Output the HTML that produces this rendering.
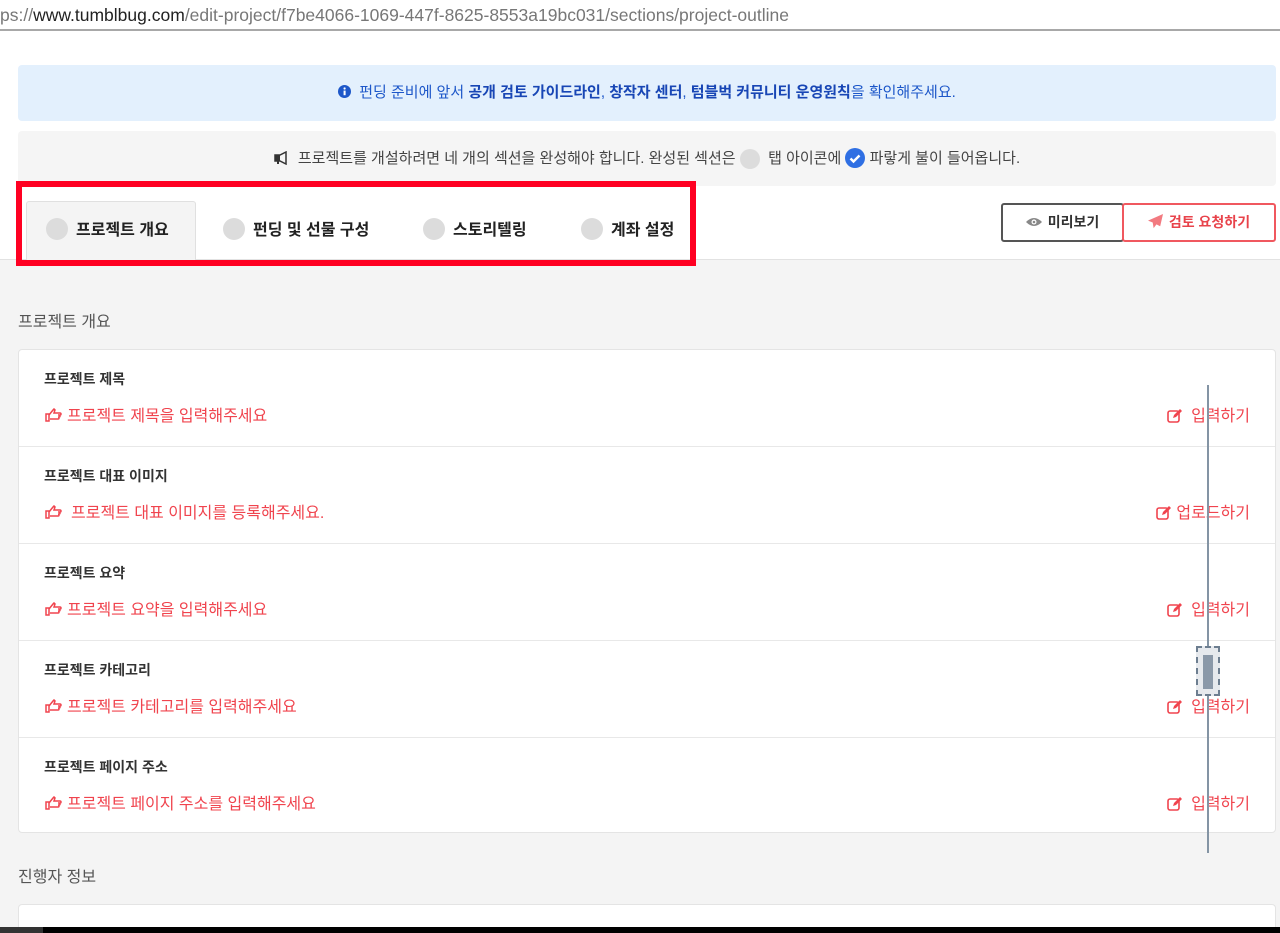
<!DOCTYPE html>
<html><head><meta charset="utf-8">
<style>
*{margin:0;padding:0;box-sizing:border-box}
html{width:1280px;height:933px;overflow:hidden}
body{width:1280px;height:933px;overflow:hidden;background:#f4f4f4;font-family:"Liberation Sans","Noto Sans CJK KR",sans-serif;position:relative;color:#333}
.abs{position:absolute}
.url{left:0;top:0;width:1280px;height:31px;background:#fff;border-bottom:2px solid #a8a8a8;font-size:17.5px;line-height:30px;color:#777;white-space:nowrap;padding-left:0}
.url b{font-weight:normal;color:#222}
.top{left:0;top:31px;width:1280px;height:229px;background:#fff;border-bottom:1px solid #e2e2e2}
.info{left:18px;top:65px;width:1258px;height:56px;background:#e3f0fd;border-radius:4px;text-align:center;font-size:15px;line-height:56px;color:#1d57c9}
.info strong{font-weight:bold;color:#1846b5}
.note{left:18px;top:131px;width:1258px;height:55px;background:#f5f5f5;border-radius:4px;text-align:center;font-size:15px;line-height:55px;color:#444}
.circ{display:inline-block;width:20px;height:20px;border-radius:50%;background:#dcdcdc;vertical-align:middle}
.tab{top:201px;height:60px;font-size:16px;font-weight:bold;color:#222;line-height:60px}
.tab .circ{width:22px;height:22px;margin-right:8px;margin-top:-3px}
.redbox{left:16px;top:181px;width:680px;height:85px;border:6px solid #ff0022}
.btn{top:203px;height:39px;font-size:14px;font-weight:bold;line-height:35px;text-align:center;border-radius:3px;background:#fff}
.card{left:18px;top:349px;width:1258px;height:484px;background:#fff;border:1px solid #e4e4e4;border-radius:4px}
.row{position:absolute;left:0;width:1256px;height:97px;border-bottom:1px solid #e8e8e8}
.row .t{position:absolute;left:25px;top:19px;font-size:14px;font-weight:bold;color:#333}
.row .r{position:absolute;left:26px;top:52px;font-size:16px;color:#f0444e}
.row .a{position:absolute;right:25px;top:52px;font-size:16px;color:#f0444e}
svg{vertical-align:middle}
</style></head><body>
<div class="abs url">ps://<b>www.tumblbug.com</b>/edit-project/f7be4066-1069-447f-8625-8553a19bc031/sections/project-outline</div>
<div class="abs top"></div>
<div class="abs info"><svg width="13" height="13" viewBox="0 0 14 14" style="margin-right:8px;margin-top:-3px"><circle cx="7" cy="7" r="7" fill="#1d57c9"/><rect x="6" y="6" width="2.2" height="5" fill="#fff"/><circle cx="7.1" cy="3.8" r="1.2" fill="#fff"/></svg>펀딩 준비에 앞서 <strong>공개 검토 가이드라인</strong>, <strong>창작자 센터</strong>, <strong>텀블벅 커뮤니티 운영원칙</strong>을 확인해주세요.</div>
<div class="abs note"><svg width="16" height="14" viewBox="0 0 16 14" style="margin-right:8px;margin-top:-3px"><path d="M1 4h5l6-3v12L6 10H1z" fill="none" stroke="#333" stroke-width="1.5"/><rect x="1" y="4" width="5" height="6" fill="#333"/><rect x="3" y="10" width="2" height="3" fill="#333"/></svg>프로젝트를 개설하려면 네 개의 섹션을 완성해야 합니다. 완성된 섹션은 <span class="circ"></span>&nbsp; 탭 아이콘에 <svg width="20" height="20" viewBox="0 0 20 20" style="margin-top:-3px"><circle cx="10" cy="10" r="10" fill="#2f6fe3"/><path d="M5.5 10.5l3 3 6-6" stroke="#fff" stroke-width="2.4" fill="none"/></svg> 파랗게 불이 들어옵니다.</div>
<div class="abs" style="left:26px;top:201px;width:170px;height:60px;background:#f4f4f4;border:1px solid #e0e0e0;border-bottom:none;border-radius:3px 3px 0 0"></div>
<div class="abs tab" style="left:46px"><span class="circ"></span>프로젝트 개요</div>
<div class="abs tab" style="left:223px"><span class="circ"></span>펀딩 및 선물 구성</div>
<div class="abs tab" style="left:423px"><span class="circ"></span>스토리텔링</div>
<div class="abs tab" style="left:581px"><span class="circ"></span>계좌 설정</div>
<div class="abs redbox"></div>
<div class="abs btn" style="left:1001px;width:123px;border:2px solid #555;color:#333"><svg width="16" height="10" viewBox="0 0 16 10" style="margin-right:6px;margin-top:-2px"><path d="M0 5Q8-3 16 5Q8 13 0 5z" fill="#888"/><circle cx="8" cy="5" r="2.5" fill="#fff"/><circle cx="8" cy="5" r="1.3" fill="#888"/></svg>미리보기</div>
<div class="abs btn" style="left:1122px;width:154px;border:2px solid #f0585f;color:#e8434b"><svg width="15" height="15" viewBox="0 0 16 16" style="margin-right:6px;margin-top:-3px"><path d="M16 0L0 7l5 2 1 6 3-4 4 2z" fill="#f27a80"/></svg>검토 요청하기</div>
<div class="abs" style="left:18px;top:308px;font-size:16px;color:#555">프로젝트 개요</div>
<div class="abs card">
 <div class="row" style="top:0"><div class="t">프로젝트 제목</div><div class="r"><svg width="17" height="14" viewBox="0 0 17 14" style="margin-right:5px;margin-top:-3px"><path d="M1 6h3v7H1zM4 7l4-5 1-1 1 1-1 3h6a1 1 0 010 2h-2 1a1 1 0 010 2h-1a1 1 0 010 2H5" fill="none" stroke="#f0444e" stroke-width="1.5"/></svg>프로젝트 제목을 입력해주세요</div><div class="a"><svg width="16" height="15" viewBox="0 0 16 15" style="margin-right:8px;margin-top:-3px"><rect x="1" y="3" width="11" height="11" rx="2" fill="none" stroke="#f0444e" stroke-width="1.6"/><path d="M6 10l1-3 6-6 2 2-6 6z" fill="#f0444e"/></svg>입력하기</div></div>
 <div class="row" style="top:97px"><div class="t">프로젝트 대표 이미지</div><div class="r"><svg width="17" height="14" viewBox="0 0 17 14" style="margin-right:9px;margin-top:-3px"><path d="M1 6h3v7H1zM4 7l4-5 1-1 1 1-1 3h6a1 1 0 010 2h-2 1a1 1 0 010 2h-1a1 1 0 010 2H5" fill="none" stroke="#f0444e" stroke-width="1.5"/></svg>프로젝트 대표 이미지를 등록해주세요.</div><div class="a"><svg width="16" height="15" viewBox="0 0 16 15" style="margin-right:4px;margin-top:-3px"><rect x="1" y="3" width="11" height="11" rx="2" fill="none" stroke="#f0444e" stroke-width="1.6"/><path d="M6 10l1-3 6-6 2 2-6 6z" fill="#f0444e"/></svg>업로드하기</div></div>
 <div class="row" style="top:194px"><div class="t">프로젝트 요약</div><div class="r"><svg width="17" height="14" viewBox="0 0 17 14" style="margin-right:5px;margin-top:-3px"><path d="M1 6h3v7H1zM4 7l4-5 1-1 1 1-1 3h6a1 1 0 010 2h-2 1a1 1 0 010 2h-1a1 1 0 010 2H5" fill="none" stroke="#f0444e" stroke-width="1.5"/></svg>프로젝트 요약을 입력해주세요</div><div class="a"><svg width="16" height="15" viewBox="0 0 16 15" style="margin-right:8px;margin-top:-3px"><rect x="1" y="3" width="11" height="11" rx="2" fill="none" stroke="#f0444e" stroke-width="1.6"/><path d="M6 10l1-3 6-6 2 2-6 6z" fill="#f0444e"/></svg>입력하기</div></div>
 <div class="row" style="top:291px"><div class="t">프로젝트 카테고리</div><div class="r"><svg width="17" height="14" viewBox="0 0 17 14" style="margin-right:5px;margin-top:-3px"><path d="M1 6h3v7H1zM4 7l4-5 1-1 1 1-1 3h6a1 1 0 010 2h-2 1a1 1 0 010 2h-1a1 1 0 010 2H5" fill="none" stroke="#f0444e" stroke-width="1.5"/></svg>프로젝트 카테고리를 입력해주세요</div><div class="a"><svg width="16" height="15" viewBox="0 0 16 15" style="margin-right:8px;margin-top:-3px"><rect x="1" y="3" width="11" height="11" rx="2" fill="none" stroke="#f0444e" stroke-width="1.6"/><path d="M6 10l1-3 6-6 2 2-6 6z" fill="#f0444e"/></svg>입력하기</div></div>
 <div class="row" style="top:388px;border-bottom:none"><div class="t">프로젝트 페이지 주소</div><div class="r"><svg width="17" height="14" viewBox="0 0 17 14" style="margin-right:5px;margin-top:-3px"><path d="M1 6h3v7H1zM4 7l4-5 1-1 1 1-1 3h6a1 1 0 010 2h-2 1a1 1 0 010 2h-1a1 1 0 010 2H5" fill="none" stroke="#f0444e" stroke-width="1.5"/></svg>프로젝트 페이지 주소를 입력해주세요</div><div class="a"><svg width="16" height="15" viewBox="0 0 16 15" style="margin-right:8px;margin-top:-3px"><rect x="1" y="3" width="11" height="11" rx="2" fill="none" stroke="#f0444e" stroke-width="1.6"/><path d="M6 10l1-3 6-6 2 2-6 6z" fill="#f0444e"/></svg>입력하기</div></div>
</div>
<div class="abs" style="left:18px;top:863px;font-size:16px;color:#555">진행자 정보</div>
<div class="abs" style="left:18px;top:904px;width:1258px;height:23px;background:#fff;border:1px solid #e4e4e4;border-bottom:none;border-radius:4px 4px 0 0"></div>
<div class="abs" style="left:1207px;top:385px;width:2px;height:468px;background:#8494a4"></div>
<div class="abs" style="left:1196px;top:646px;width:24px;height:50px;border:2px dashed #6d7e90;background:#e6e9ed"></div>
<div class="abs" style="left:1203px;top:655px;width:10px;height:34px;background:#8a98a8"></div>
<div class="abs" style="left:0;top:927px;width:1280px;height:6px;background:#000"></div>
<div class="abs" style="left:0;top:927px;width:43px;height:6px;background:#333"></div>
</body></html>
